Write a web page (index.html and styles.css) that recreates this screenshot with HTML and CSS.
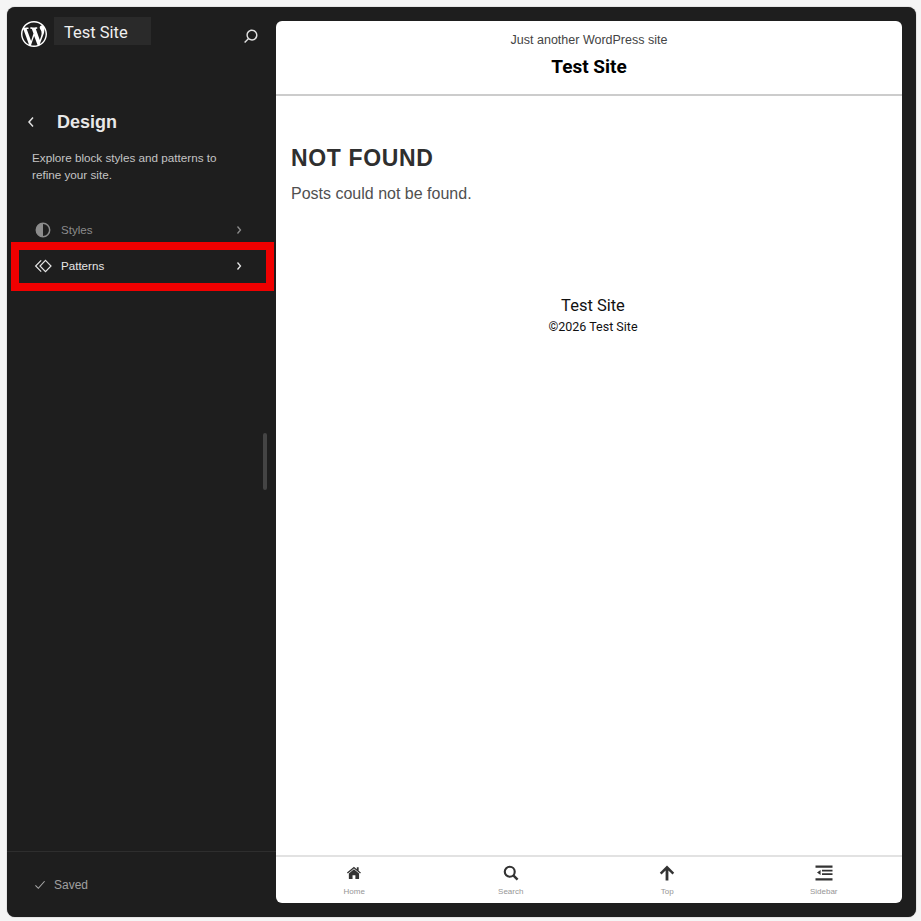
FILE: index.html
```html
<!DOCTYPE html>
<html lang="en">

<head>
    <meta charset="UTF-8">
    <title>Design</title>
    <link rel="stylesheet" href="styles.css">
</head>

<body>
    <div class="frame">
        <aside class="sidebar">
            <div class="topbar">
                <svg class="wp-logo" viewBox="0 0 20 20">
                    <path fill="#fff" d="M20 10c0-5.51-4.49-10-10-10C4.48 0 0 4.49 0 10c0 5.52 4.48 10 10 10 5.51 0 10-4.48 10-10zM7.78 15.37L4.37 6.22c.55-.02 1.17-.08 1.17-.08.5-.06.44-1.13-.06-1.11 0 0-1.45.11-2.37.11-.18 0-.37 0-.58-.01C4.12 2.69 6.87 1.11 10 1.11c2.33 0 4.45.87 6.05 2.34-.68-.11-1.65.39-1.65 1.58 0 .74.45 1.36.9 2.1.35.61.55 1.36.55 2.46 0 1.49-1.4 5-1.4 5l-3.03-8.37c.54-.02.82-.17.82-.17.5-.05.44-1.25-.06-1.22 0 0-1.44.12-2.38.12-.87 0-2.33-.12-2.33-.12-.5-.03-.56 1.2-.06 1.22l.92.08 1.26 3.41zM17.41 10c.24-.64.74-1.87.43-4.25.7 1.29 1.05 2.71 1.05 4.25 0 3.29-1.73 6.24-4.4 7.78.97-2.59 1.94-5.2 2.92-7.78zM6.1 18.09C3.12 16.65 1.11 13.53 1.11 10c0-1.3.23-2.48.72-3.59C3.25 10.3 4.67 14.2 6.1 18.09zm4.03-6.63l2.58 6.98c-.86.29-1.76.45-2.71.45-.79 0-1.57-.11-2.29-.33.81-2.38 1.62-4.74 2.42-7.1z" />
                </svg>
                <div class="site-name">Test Site</div>
                <svg class="search-icon" viewBox="0 0 24 24">
                    <path fill="#e0e0e0" d="M13 5c-3.3 0-6 2.7-6 6 0 1.4.5 2.7 1.3 3.7l-3.8 3.8 1.1 1.1 3.8-3.8c1 .8 2.3 1.3 3.7 1.3 3.3 0 6-2.7 6-6S16.3 5 13 5zm0 10.5c-2.5 0-4.5-2-4.5-4.5s2-4.5 4.5-4.5 4.5 2 4.5 4.5-2 4.5-4.5 4.5z" />
                </svg>
            </div>

            <div class="panel-title">
                <svg class="back-icon" viewBox="0 0 8 12">
                    <path d="M6 1.5 2 6l4 4.5" fill="none" stroke="#e0e0e0" stroke-width="1.5" />
                </svg>
                <h2>Design</h2>
            </div>
            <p class="panel-desc">Explore block styles and patterns to<br>refine your site.</p>

            <nav class="menu">
                <div class="menu-item dim">
                    <svg class="menu-icon" viewBox="0 0 18 18">
                        <circle cx="9" cy="9" r="6.7" fill="none" stroke="#8c8c8c" stroke-width="1.5" />
                        <path d="M9 2.3a6.7 6.7 0 0 0 0 13.4z" fill="#8c8c8c" />
                    </svg>
                    <span>Styles</span>
                    <svg class="chevron" viewBox="0 0 6 10">
                        <path d="M1.5 1.5 4.5 5l-3 3.5" fill="none" stroke="#8c8c8c" stroke-width="1.3" />
                    </svg>
                </div>
                <div class="menu-item active">
                    <svg class="menu-icon" viewBox="0 0 18 18">
                        <path d="M11.5 3.3 17 9l-5.5 5.7L6 9z" fill="none" stroke="#e6e6e6" stroke-width="1.2" />
                        <path d="M7.2 3.3 1.6 9l5.6 5.7" fill="none" stroke="#e6e6e6" stroke-width="1.2" />
                    </svg>
                    <span>Patterns</span>
                    <svg class="chevron" viewBox="0 0 6 10">
                        <path d="M1.5 1.5 4.5 5l-3 3.5" fill="none" stroke="#e6e6e6" stroke-width="1.3" />
                    </svg>
                </div>
            </nav>

            <div class="scroll-thumb"></div>

            <div class="saved">
                <svg class="check-icon" viewBox="0 0 14 12">
                    <path d="M1.5 6.5 5 10l7.5-8.5" fill="none" stroke="#a8a8a8" stroke-width="1.3" />
                </svg>
                <span>Saved</span>
            </div>
        </aside>

        <section class="preview">
            <header class="site-header">
                <p class="tagline">Just another WordPress site</p>
                <h1>Test Site</h1>
            </header>

            <main class="content">
                <h2>NOT FOUND</h2>
                <p>Posts could not be found.</p>
            </main>

            <footer class="site-footer">
                <div class="footer-name">Test Site</div>
                <div class="footer-copy">©2026 Test Site</div>
            </footer>

            <nav class="tabs">
                <div class="tab">
                    <svg viewBox="0 0 18 16">
                        <g transform="translate(1.4 1.3) scale(.84)">
                            <path fill="#333" d="M9 3.6 2.9 8.7v5.8c0 .4.3.7.7.7h3.7v-4.4h3.4v4.4h3.7c.4 0 .7-.3.7-.7V8.7z" />
                            <path fill="#333" d="M9 .6 .7 7.4l1 1.2L9 2.5l7.3 6.1 1-1.2-2.7-2.2V1.2h-2.2v2.2z" />
                        </g>
                    </svg>
                    <span>Home</span>
                </div>
                <div class="tab">
                    <svg viewBox="0 0 18 18">
                        <circle cx="7.6" cy="7.6" r="5.6" fill="none" stroke="#333" stroke-width="2.4" />
                        <path d="M11.6 11.6 16.4 16.4" fill="none" stroke="#333" stroke-width="2.8" />
                    </svg>
                    <span>Search</span>
                </div>
                <div class="tab">
                    <svg viewBox="0 0 18 16">
                        <path fill="#333" d="M9 .6 1.8 7.8l1.7 1.7 4.1-4.1v10h2.8v-10l4.1 4.1 1.7-1.7z" />
                    </svg>
                    <span>Top</span>
                </div>
                <div class="tab">
                    <svg viewBox="0 0 18 16">
                        <path fill="#333" d="M.5.6h17v2.2H.5zM7 4.7h10.5v1.8H7zM7 8.3h10.5v1.8H7zM.5 13.2h17v2.2H.5zM5.6 4.9v5L2 7.4z" />
                    </svg>
                    <span>Sidebar</span>
                </div>
            </nav>
        </section>
    </div>
</body>

</html>
```

FILE: styles.css
```css
* {
    box-sizing: border-box;
}

html,
body {
    height: 100%;
}

body {
    margin: 0;
    padding: 7px 5px 4px 7px;
    background: #f5f5f5;
    font-family: "Liberation Sans", Arial, sans-serif;
}

.frame {
    display: flex;
    height: 100%;
    background: #1e1e1e;
    border-radius: 8px;
    box-shadow: 0 0 1px #555;
}

/* left panel */
.sidebar {
    position: relative;
    display: flex;
    flex-direction: column;
    width: 269px;
    flex-shrink: 0;
}

.topbar {
    display: flex;
    align-items: flex-start;
    height: 45px;
    padding: 10px 0 0 14px;
}

.wp-logo {
    width: 26px;
    height: 26px;
    margin-top: 4px;
}

.site-name {
    width: 97px;
    height: 28px;
    margin-left: 7px;
    padding-left: 10px;
    background: #2a2a2a;
    color: #f0f0f0;
    font-family: Roboto, sans-serif;
    font-size: 16.5px;
    line-height: 32px;
}

.search-icon {
    width: 22px;
    height: 22px;
    margin: 8px 0 0 89px;
}

.panel-title {
    display: flex;
    align-items: center;
    height: 28px;
    margin-top: 56px;
    padding-left: 20px;
}

.back-icon {
    width: 8px;
    height: 12px;
}

.panel-title h2 {
    margin: 0 0 0 22px;
    color: #e8e8e8;
    font-size: 18px;
    font-weight: bold;
}

.panel-desc {
    margin: 13px 0 0 25px;
    color: #c4c4c4;
    font-size: 11.7px;
    line-height: 17px;
}

.menu {
    margin-top: 34px;
    padding-left: 4px;
}

.menu-item {
    display: flex;
    align-items: center;
    width: 263px;
    font-size: 11.6px;
}

.menu-item.dim {
    height: 25px;
    padding: 0 0 0 23px;
    color: #8c8c8c;
}

.menu-item.active {
    height: 49px;
    padding: 0 0 2px 15px;
    border: 8px solid #f00000;
    color: #e6e6e6;
}

.menu-icon {
    width: 18px;
    height: 18px;
    flex-shrink: 0;
}

.menu-item span {
    flex: 1;
    margin-left: 9px;
}

.chevron {
    width: 6px;
    height: 10px;
    margin-right: 32px;
}

.menu-item.active .chevron {
    margin-right: 24px;
}

.scroll-thumb {
    position: absolute;
    top: 426px;
    left: 256px;
    width: 4px;
    height: 57px;
    border-radius: 2px;
    background: #444;
}

.saved {
    display: flex;
    align-items: center;
    height: 66px;
    margin-top: auto;
    padding: 0 0 0 27px;
    border-top: 1px solid #2e2e2e;
    color: #a0a0a0;
    font-size: 12px;
}

.check-icon {
    width: 12px;
    height: 10px;
}

.saved span {
    margin-left: 8px;
}

/* site preview */
.preview {
    display: flex;
    flex-direction: column;
    flex: 1;
    margin: 14px 14px 14px 0;
    background: #fff;
    border-radius: 6px;
    overflow: hidden;
}

.site-header {
    height: 75px;
    padding-top: 12px;
    border-bottom: 2px solid #ccc;
    text-align: center;
}

.tagline {
    margin: 0;
    color: #444;
    font-size: 12.5px;
    line-height: 15px;
}

.site-header h1 {
    margin: 6px 0 0;
    color: #000;
    font-family: Roboto, sans-serif;
    font-size: 19px;
    font-weight: bold;
    line-height: 26px;
}

.content {
    padding: 48px 15px 0;
}

.content h2 {
    margin: 0;
    color: #2f2f2f;
    font-size: 23px;
    font-weight: bold;
    line-height: 28px;
    letter-spacing: 0.65px;
}

.content p {
    margin: 12px 0 0;
    color: #505050;
    font-size: 16px;
    line-height: 20px;
}

.site-footer {
    margin-top: 92px;
    padding-left: 8px;
    color: #111;
    font-family: Roboto, sans-serif;
    text-align: center;
}

.footer-name {
    font-size: 16.5px;
    line-height: 20px;
}

.footer-copy {
    margin-top: 3px;
    font-size: 12.5px;
    line-height: 16px;
}

.tabs {
    display: grid;
    grid-template-columns: repeat(4, 1fr);
    height: 48px;
    margin-top: auto;
    border-top: 2px solid #e2e2e2;
}

.tab {
    display: flex;
    flex-direction: column;
    align-items: center;
    padding-top: 8px;
    color: #969696;
    font-size: 8px;
}

.tab svg {
    width: 18px;
    height: 16px;
}

.tab span {
    margin-top: 6px;
}
```
